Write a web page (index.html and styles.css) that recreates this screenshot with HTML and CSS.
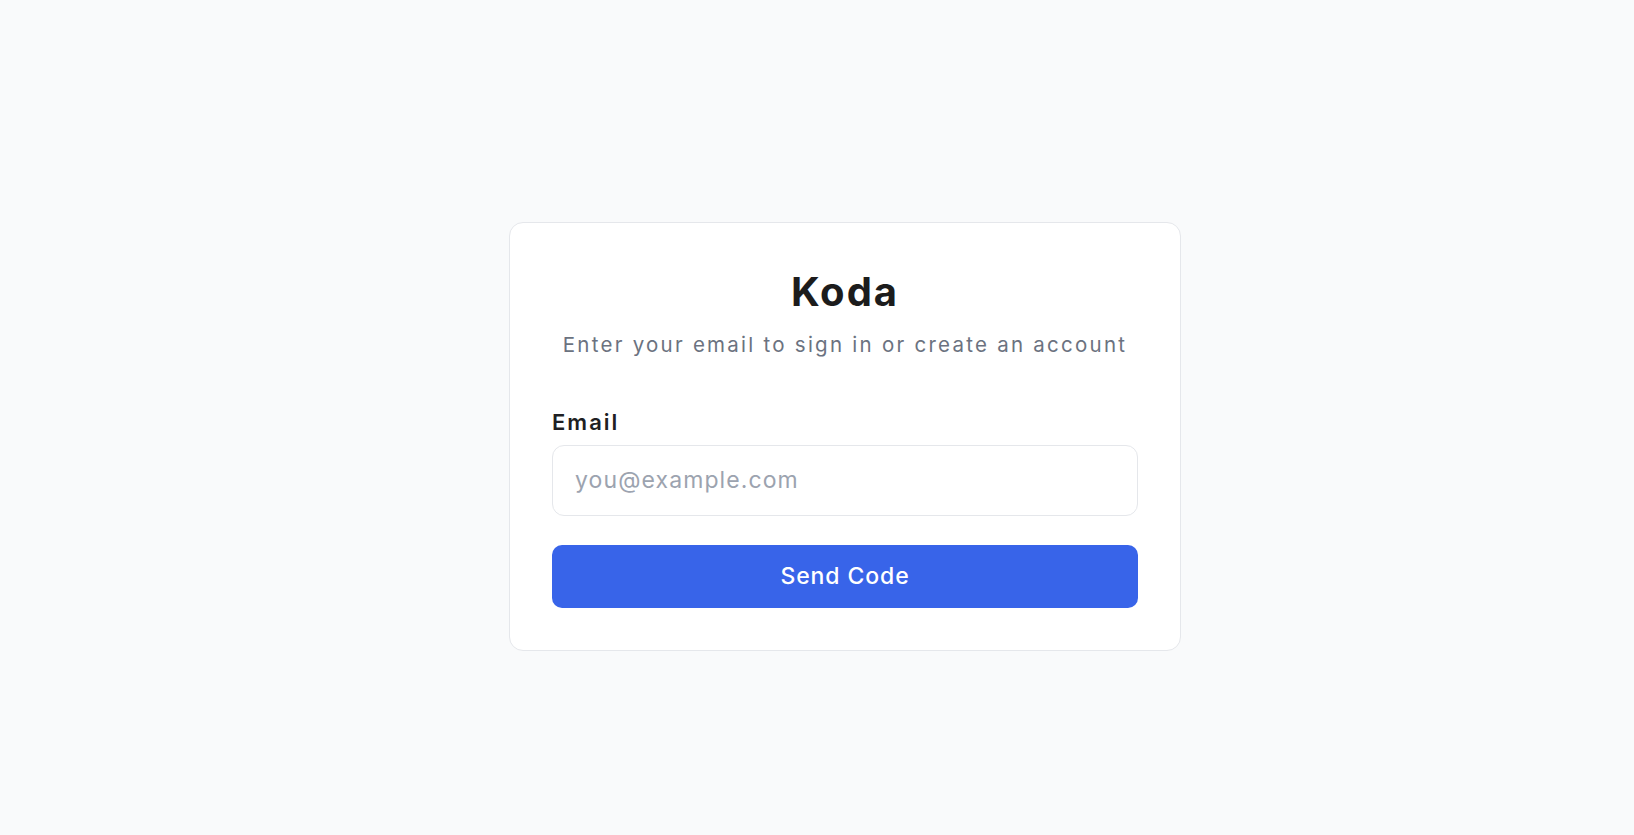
FILE: index.html
```html
<!DOCTYPE html>
<html lang="en">
<head>
<meta charset="utf-8">
<title>Koda – Sign in</title>
<link rel="stylesheet" href="styles.css">
</head>
<body>
<main class="page">
  <section class="card">
    <header class="card-header">
      <h1 class="brand">Koda</h1>
      <p class="subtitle">Enter your email to sign in or create an account</p>
    </header>
    <form class="form" onsubmit="return false;">
      <label class="label" for="email">Email</label>
      <input class="input" id="email" type="email" placeholder="you@example.com">
      <button class="button" type="submit">Send Code</button>
    </form>
  </section>
</main>
</body>
</html>
```
FILE: styles.css
```css
* { box-sizing: border-box; }
html, body { margin: 0; padding: 0; }
body {
  background: #f9fafb;
  font-family: "Inter", "Noto Sans", sans-serif;
  color: #1c1c1e;
}
.page {
  min-height: 100vh;
  display: flex;
  align-items: center;
  justify-content: center;
  padding: 37px 0 0 56px;
}
.card {
  width: 672px;
  background: #ffffff;
  border: 1px solid #e5e7eb;
  border-radius: 14px;
  padding: 45px 42px 42px;
}
.card-header {
  text-align: center;
  margin-bottom: 49px;
}
.brand {
  margin: 0;
  font-size: 40px;
  line-height: 48px;
  font-weight: 700;
  color: #1c1c1c;
  letter-spacing: 2px;
}
.subtitle {
  margin: 15px 0 0;
  font-size: 20.5px;
  line-height: 28px;
  color: #6b7280;
  letter-spacing: 2.25px;
}
.form {
  display: flex;
  flex-direction: column;
}
.label {
  font-size: 22px;
  line-height: 28px;
  font-weight: 600;
  color: #1f1f23;
  letter-spacing: 2px;
  margin-bottom: 9px;
}
.input {
  height: 71px;
  width: 100%;
  border: 1px solid #e5e7eb;
  border-radius: 12px;
  padding: 0 22px;
  font-family: inherit;
  font-size: 23px;
  color: #1f2937;
  background: #ffffff;
  outline: none;
  margin-bottom: 29px;
}
.input::placeholder {
  color: #9ca3af;
  letter-spacing: 1.1px;
}
.button {
  height: 63px;
  width: 100%;
  border: none;
  border-radius: 10px;
  background: #3864e9;
  color: #ffffff;
  font-family: inherit;
  font-size: 23px;
  font-weight: 500;
  letter-spacing: 0.9px;
  cursor: pointer;
}
```
